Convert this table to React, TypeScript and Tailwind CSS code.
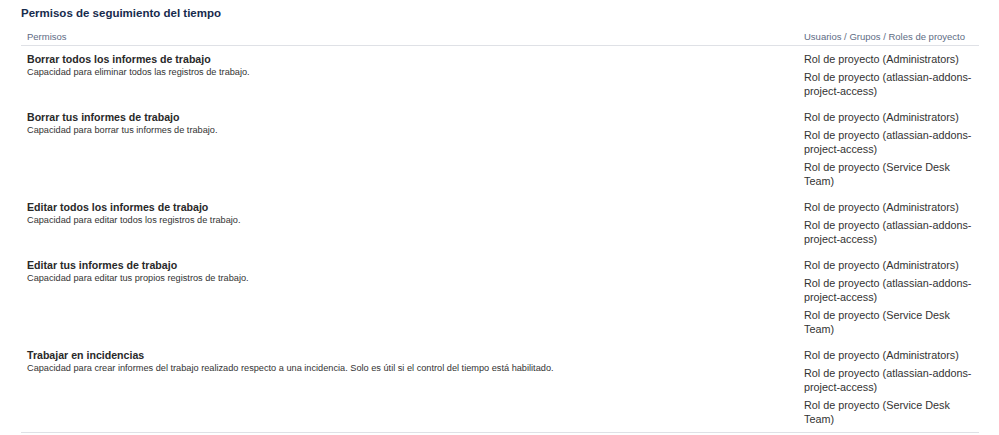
import React from "react";

const A = "Rol de proyecto (Administrators)";
const B = "Rol de proyecto (atlassian-addons-project-access)";
const C = "Rol de proyecto (Service Desk Team)";

const rows = [
  {
    t: "Borrar todos los informes de trabajo",
    d: "Capacidad para eliminar todos las registros de trabajo.",
    r: [A, B],
  },
  {
    t: "Borrar tus informes de trabajo",
    d: "Capacidad para borrar tus informes de trabajo.",
    r: [A, B, C],
  },
  {
    t: "Editar todos los informes de trabajo",
    d: "Capacidad para editar todos los registros de trabajo.",
    r: [A, B],
  },
  {
    t: "Editar tus informes de trabajo",
    d: "Capacidad para editar tus propios registros de trabajo.",
    r: [A, B, C],
  },
  {
    t: "Trabajar en incidencias",
    d: "Capacidad para crear informes del trabajo realizado respecto a una incidencia. Solo es útil si el control del tiempo está habilitado.",
    r: [A, B, C],
  },
];

export default function App() {
  return (
    <div className="w-[999px] h-[435px] bg-white font-['Liberation_Sans',Arial,sans-serif] overflow-hidden">
      <div className="pl-[21px] pr-[20px] pt-[5px]">
        <h2 className="text-[11.5px] leading-[16px] font-bold text-[#172B4D]">
          Permisos de seguimiento del tiempo
        </h2>
        <div className="grid grid-cols-[1fr_181px] border-b border-[#DFE1E6] pt-[10px] pb-[2px] text-[9.5px] leading-[12px] text-[#5E6C84]">
          <div className="px-[6px]">Permisos</div>
          <div className="px-[6px]">Usuarios / Grupos / Roles de proyecto</div>
        </div>
        <div className="border-b border-[#DFE1E6]">
          {rows.map((row, i) => (
            <div key={i} className="grid grid-cols-[1fr_181px] py-[6px]">
              <div className="px-[6px]">
                <div className="text-[10.6px] leading-[14px] font-bold text-[#292929]">{row.t}</div>
                <div className="text-[9.2px] leading-[13px] text-[#333333]">{row.d}</div>
              </div>
              <div className="px-[6px] flex flex-col gap-[4px]">
                {row.r.map((x, j) => (
                  <div key={j} className="text-[10.8px] leading-[14px] text-[#333333]">
                    {x}
                  </div>
                ))}
              </div>
            </div>
          ))}
        </div>
      </div>
    </div>
  );
}
